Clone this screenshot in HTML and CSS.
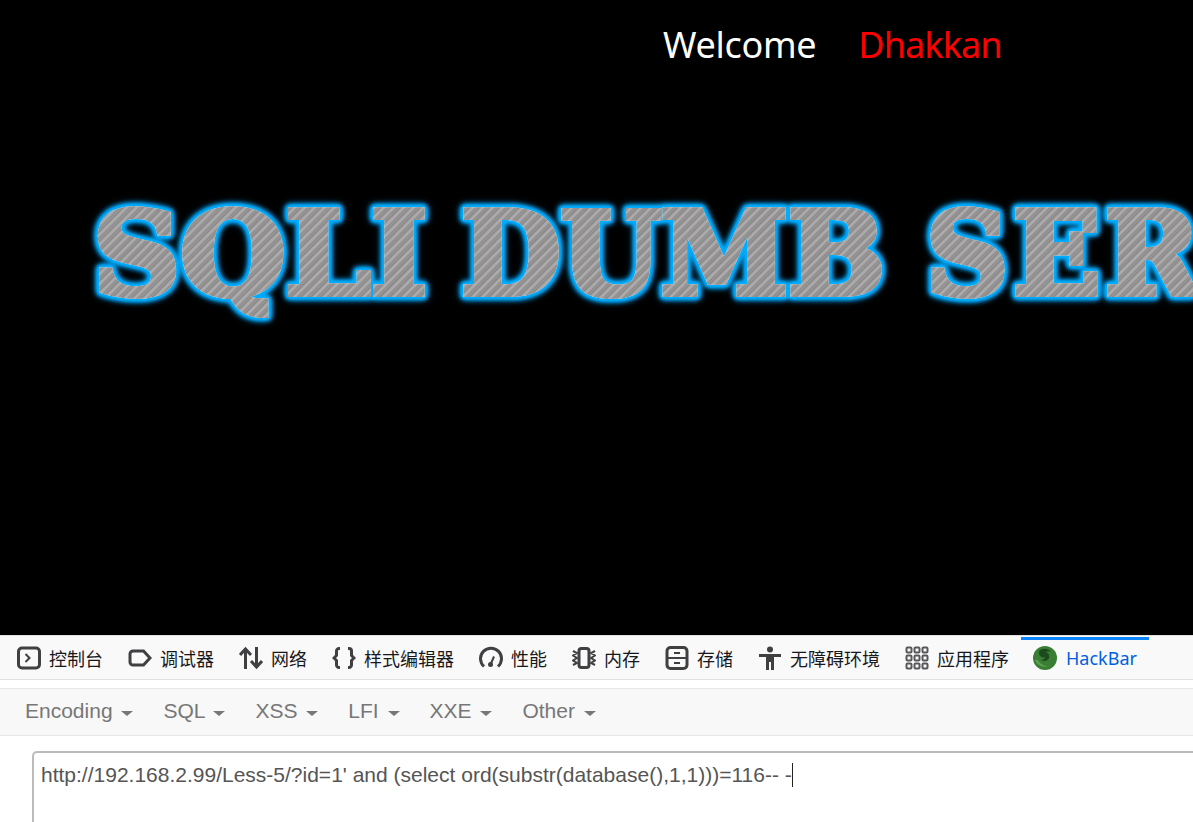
FILE: index.html
```html
<!DOCTYPE html>
<html lang="en">
  <head>
    <meta charset="UTF-8" />
    <meta name="viewport" content="width=device-width, initial-scale=1.0" />
    <title>Less-5</title>
    <link rel="stylesheet" href="styles.css">
  </head>
  <body>
    <main class="page">
      <div class="welcome">
        <span>Welcome</span>
        <span class="name">Dhakkan</span>
      </div>
      <svg class="banner" viewBox="0 0 1193 160">
        <defs>
          <pattern id="brushed" width="7" height="7" patternUnits="userSpaceOnUse" patternTransform="rotate(45)">
            <rect width="7" height="7" fill="#9c9a9a" />
            <rect x="1" width="1" height="7" fill="#858585" />
            <rect x="3" width="2" height="7" fill="#adabab" />
            <rect x="6" width="1" height="7" fill="#8c8c8c" />
          </pattern>
        </defs>
        <text class="banner-text" y="124">
          <tspan x="93" textLength="334" lengthAdjust="spacingAndGlyphs">SQLI</tspan>
          <tspan x="461" textLength="424" lengthAdjust="spacingAndGlyphs">DUMB</tspan>
          <tspan class="banner-last" x="926">SERIES</tspan>
        </text>
      </svg>
    </main>

    <section class="devtools">
      <nav class="tabs">
        <a class="tab">
          <svg class="icon" viewBox="0 0 24 24"><rect x="1.500" y="2" width="21" height="20" rx="3.500" class="line" /><path d="M8.500 8l4 4-4 4" class="thin" /></svg>
          控制台
        </a>
        <a class="tab">
          <svg class="icon" viewBox="0 0 24 24"><path d="M5 5h10.500L22 12l-6.500 7H5a3 3 0 0 1-3-3V8a3 3 0 0 1 3-3z" class="line" /></svg>
          调试器
        </a>
        <a class="tab">
          <svg class="icon" viewBox="0 0 24 24"><path d="M6.500 23V3M1 9l5.500-6L12 9M17.500 1v20M12 15l5.500 6 5.500-6" class="line" /></svg>
          网络
        </a>
        <a class="tab">
          <svg class="icon" viewBox="0 0 24 24"><path d="M8 2.500H7A2.500 2.500 0 0 0 4.500 5v4.500L2 12l2.500 2.500V19A2.500 2.500 0 0 0 7 21.500h1M16 2.500h1A2.500 2.500 0 0 1 19.500 5v4.500L22 12l-2.500 2.500V19a2.500 2.500 0 0 1-2.500 2.500h-1" class="line" /></svg>
          样式编辑器
        </a>
        <a class="tab">
          <svg class="icon" viewBox="0 0 24 24"><path d="M5 20.500a10.500 10.500 0 1 1 14 0" class="line" /><path d="M12 17.500l3-7" class="thin" /><circle cx="11.500" cy="18.500" r="2.500" class="fill" /></svg>
          性能
        </a>
        <a class="tab">
          <svg class="icon" viewBox="0 0 24 24"><rect x="7" y="2.500" width="10" height="19" rx="2.500" class="line" /><path d="M1 5l4 2-4 2.500 4 2.500-4 2.500 4 2.500-4 2M23 5l-4 2 4 2.500-4 2.500 4 2.500-4 2.500 4 2" class="thin" /></svg>
          内存
        </a>
        <a class="tab">
          <svg class="icon" viewBox="0 0 24 24"><rect x="2" y="1.500" width="20" height="21" rx="3.500" class="line" /><path d="M2 12h20M9 7h6M9 17h6" class="thin" /></svg>
          存储
        </a>
        <a class="tab">
          <svg class="icon" viewBox="0 0 24 24"><circle cx="12" cy="3.500" r="3" class="fill" /><path d="M1 8h22v3h-7v13h-3v-8h-2v8H8V11H1z" class="fill" /></svg>
          无障碍环境
        </a>
        <a class="tab">
          <svg class="icon" viewBox="0 0 24 24"><g class="grid"><rect x="1.500" y="1.500" width="5" height="5" rx="1" /><rect x="9.500" y="1.500" width="5" height="5" rx="1" /><rect x="17.500" y="1.500" width="5" height="5" rx="1" /><rect x="1.500" y="9.500" width="5" height="5" rx="1" /><rect x="9.500" y="9.500" width="5" height="5" rx="1" /><rect x="17.500" y="9.500" width="5" height="5" rx="1" /><rect x="1.500" y="17.500" width="5" height="5" rx="1" /><rect x="9.500" y="17.500" width="5" height="5" rx="1" /><rect x="17.500" y="17.500" width="5" height="5" rx="1" /></g></svg>
          应用程序
        </a>
        <a class="tab active">
          <svg class="icon" viewBox="0 0 24 24"><circle cx="12" cy="12" r="12" fill="#3a7d34" /><path d="M6 5c3-3 9-3 12 1-2-1-4-1-5 0 2 1 4 3 3 6-1 3-5 4-8 2 2 0 4-1 4-3-2 1-5 0-6-3z" fill="#1c4a1c" /><path d="M2 14c2 5 7 8 13 6-4 0-8-2-10-6z" fill="#5ea04e" /></svg>
          HackBar
        </a>
      </nav>

      <div class="hackbar">
        <div class="menu">
          <a class="menu-item">Encoding <i class="caret"></i></a>
          <a class="menu-item">SQL <i class="caret"></i></a>
          <a class="menu-item">XSS <i class="caret"></i></a>
          <a class="menu-item">LFI <i class="caret"></i></a>
          <a class="menu-item">XXE <i class="caret"></i></a>
          <a class="menu-item">Other <i class="caret"></i></a>
        </div>
        <div class="url-wrap">
          <div class="url-box">http://192.168.2.99/Less-5/?id=1' and (select ord(substr(database(),1,1)))=116-- -<span class="cursor"></span></div>
        </div>
      </div>
    </section>
  </body>
</html>
```

FILE: styles.css
```css
html,
body {
  margin: 0;
  padding: 0;
  height: 822px;
  overflow: hidden;
}

body {
  display: flex;
  flex-direction: column;
  background-color: #fff;
  font-family: "Liberation Sans", Arial, sans-serif;
}

/* Page under test */
.page {
  height: 635px;
  flex: none;
  background-color: #000;
  overflow: hidden;
}

.welcome {
  display: flex;
  gap: 42px;
  padding: 20px 0 0 663px;
  font-family: "Noto Sans", sans-serif;
  font-size: 36px;
  letter-spacing: -0.3px;
  line-height: 50px;
  color: #fff;
}

.name {
  color: #f00;
  letter-spacing: -0.9px;
}

.banner {
  display: block;
  width: 1193px;
  height: 160px;
  margin-top: 100px;
  filter: drop-shadow(0 0 0.5px #eaf7ff) drop-shadow(0 0 1.5px #00aeff) drop-shadow(0 0 1.5px #00aeff) drop-shadow(0 0 1.5px #00aeff) drop-shadow(0 0 2px #00aeff) drop-shadow(0 0 2.5px #0098e8);
}

.banner-text {
  font-family: "DejaVu Serif", serif;
  font-weight: bold;
  font-size: 114px;
  fill: url(#brushed);
  stroke: url(#brushed);
  stroke-width: 6px;
  stroke-linejoin: miter;
}

.banner-last {
  letter-spacing: 5px;
}

/* Devtools */
.devtools {
  flex: 1;
  border-top: 1px solid #e0e0e0;
  min-height: 0;
}

.tabs {
  display: flex;
  height: 44px;
  box-sizing: border-box;
  padding-left: 4px;
  background-color: #f9f9fa;
  border-bottom: 1px solid #e0e0e1;
}

.tab {
  display: flex;
  align-items: center;
  gap: 8px;
  padding: 0 12px 0 13px;
  font-family: "Noto Sans CJK SC", "Noto Sans", sans-serif;
  font-size: 18px;
  color: #18181a;
  white-space: nowrap;
}

.tab.active {
  padding: 0 12px;
  gap: 9px;
  width: 128px;
  box-sizing: border-box;
  color: #0060df;
  box-shadow: inset 0 1px 0 #f9f9fa, inset 0 4px 0 #0a84ff;
  font-family: "Noto Sans", sans-serif;
}

.icon {
  width: 24px;
  height: 24px;
  flex: none;
}

.line {
  fill: none;
  stroke: #404042;
  stroke-width: 3;
}

.thin {
  fill: none;
  stroke: #404042;
  stroke-width: 2;
}

.fill {
  fill: #404042;
}

.grid {
  fill: none;
  stroke: #58585a;
  stroke-width: 2;
}

.hackbar {
  padding-top: 8px;
}

.menu {
  display: flex;
  gap: 30px;
  height: 43px;
  align-items: center;
  padding: 0 0 3px 25px;
  background-color: #f8f8f8;
  border-top: 1px solid #e7e7e7;
  border-bottom: 1px solid #e7e7e7;
  font-size: 21px;
  color: #777;
}

.menu-item {
  white-space: nowrap;
}

.caret {
  display: inline-block;
  margin-left: 3px;
  vertical-align: 2px;
  border-top: 5px solid #777;
  border-left: 6px solid transparent;
  border-right: 6px solid transparent;
}

.url-wrap {
  padding: 15px 0 0 32px;
}

.url-box {
  box-sizing: border-box;
  width: 1300px;
  height: 90px;
  padding: 9px 7px;
  border: 2px solid #bbb;
  border-radius: 5px 0 0 0;
  font-size: 21px;
  line-height: 26px;
  color: #555;
  white-space: nowrap;
}

.cursor {
  display: inline-block;
  width: 1px;
  height: 24px;
  vertical-align: -5px;
  background-color: #222;
}
```
